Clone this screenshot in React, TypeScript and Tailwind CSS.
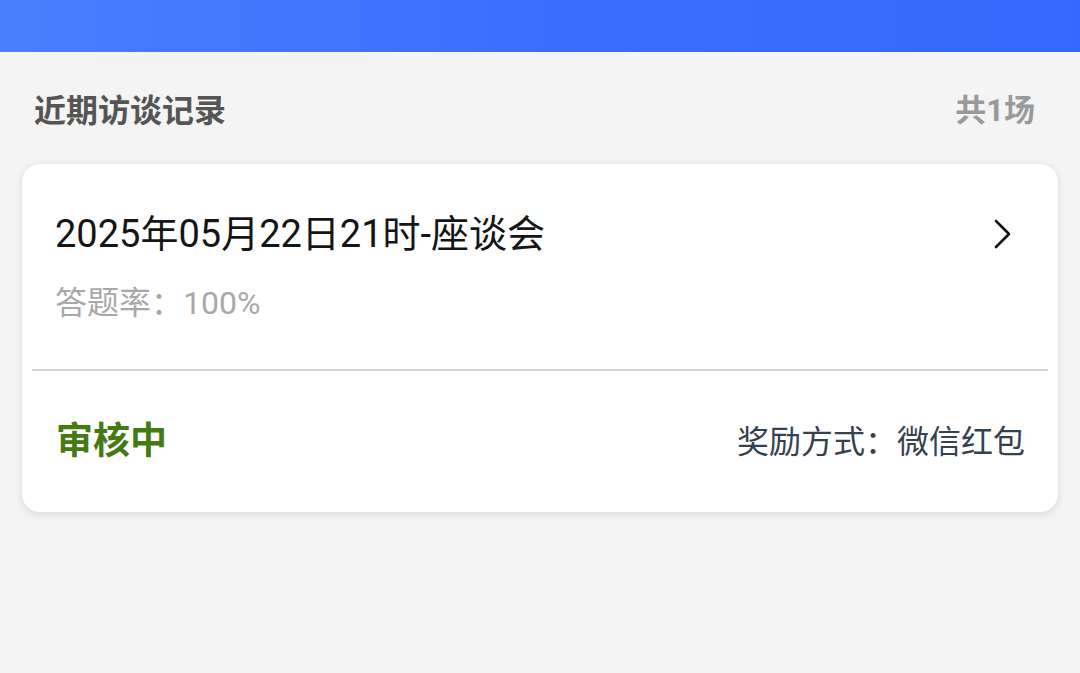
const font = { fontFamily: 'Roboto, "Noto Sans CJK SC", sans-serif' };

export default function App() {
  return (
    <div className="min-h-screen bg-[#f4f4f4]" style={font}>
      <div className="h-[52px] bg-gradient-to-r from-[#4a7efc] via-[#3b6eff] to-[#3469ff]" />

      <div className="flex items-center justify-between px-[34px] pt-[41px]">
        <h2 className="text-[32px] leading-[36px] font-bold text-[#555555]">近期访谈记录</h2>
        <span className="pr-[11px] text-[31px] leading-[36px] font-bold text-[#9a9a9a]">共1场</span>
      </div>

      <div className="mx-[22px] mt-[35px] rounded-[18px] bg-white shadow-[0_2px_8px_rgba(0,0,0,0.12)]">
        <div className="pl-[33px] pr-[45px] pt-[48px]">
          <div className="flex items-center justify-between">
            <h3 className="text-[38px] leading-[44px] text-[#151515]">2025年05月22日21时-座谈会</h3>
            <svg width="20" height="30" viewBox="0 0 20 30" fill="none">
              <path d="M3 2 L16 15 L3 28" stroke="#111" strokeWidth="2.6" strokeLinecap="round" strokeLinejoin="round" />
            </svg>
          </div>
          <p className="mt-[29px] text-[32px] leading-[36px] text-[#a8a8a8]">答题率：100%</p>
        </div>

        <div className="mx-[10px] mt-[48px] h-[2px] bg-[#d4d4d4]" />

        <div className="flex items-center justify-between pl-[34px] pr-[33px] pt-[49px] pb-[48px]">
          <span className="text-[37px] leading-[44px] font-bold text-[#457a12]">审核中</span>
          <span className="text-[32px] leading-[44px] text-[#354150]">奖励方式：微信红包</span>
        </div>
      </div>
    </div>
  );
}
